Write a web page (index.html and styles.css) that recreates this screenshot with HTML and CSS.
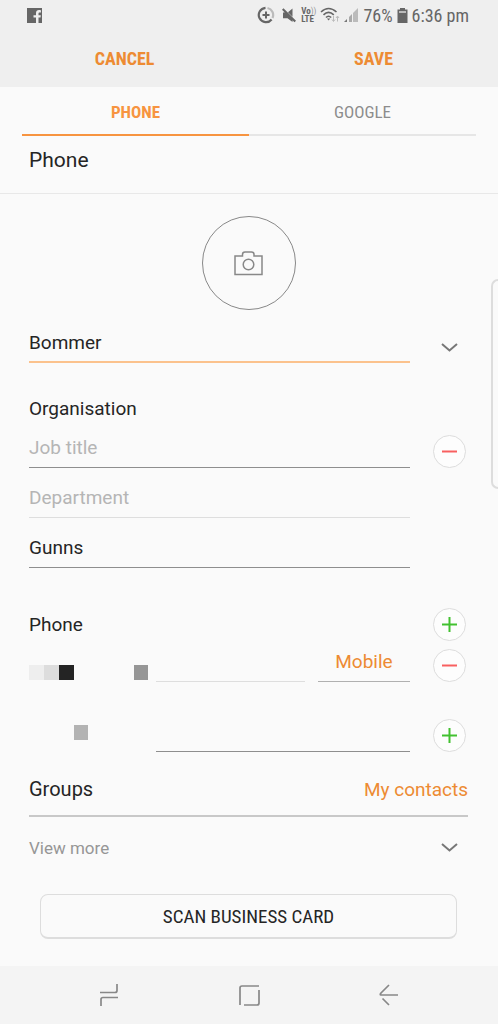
FILE: index.html
```
<!DOCTYPE html>
<html lang="en">
<head>
<meta charset="utf-8">
<meta name="viewport" content="width=device-width, initial-scale=1">
<title>Edit contact</title>
<link rel="stylesheet" href="styles.css">
</head>
<body>
<div class="screen">
  <div class="status">
    <svg class="fb" width="15" height="15" viewBox="0 0 15 15" aria-label="Facebook"><path fill="#666" d="M0 0h15v15h-3.500V9.500h2l.3-2.300h-2.300V5.600c0-.8.300-1.200 1.200-1.200h1.200V2.200C13.200 2.100 12.600 2 12 2 10.200 2 9 3.100 9 5.100v2.100H6.500v2.300H9V15H0z"/></svg>
    <div class="indicators">
      <svg class="saver" width="18" height="18" viewBox="0 0 18 18" fill="none"><path d="M8.500 1.800A7.200 7.200 0 1 0 14.600 13.500" stroke="#666" stroke-width="2.200"/><path d="M10.500 2A7.200 7.200 0 0 1 15.500 12" stroke="#bbb" stroke-width="2.200"/><path d="M9 5.500v7M5.500 9h7" stroke="#666" stroke-width="2"/></svg>
      <svg width="15" height="15" viewBox="0 0 15 15"><path fill="#666" d="M0 1.800L1.500.3 14 12.800l-1.500 1.500-2-2V14L5.500 10.300H1V4.500h1.700zM6 4.200L10.500.5v8.200z"/></svg>
      <span class="volte"><span>Vo<i>))</i></span><span>LTE</span></span>
      <svg width="20" height="16" viewBox="0 0 20 16" fill="none"><g stroke="#666" stroke-width="1.600"><path d="M1 5Q8.500-2 16.500 5"/><path d="M3.500 7.800Q8.500 3 13.800 7.800"/><path d="M6 10.500Q8.500 8 11.200 10.500"/></g><path fill="#666" d="M7 11.500h3.200l-1.600 2z"/><path stroke="#bbb" d="M13.500 9v5M12 12.500l1.500 2 1.500-2M17.500 14.500V9.500M16 11l1.500-2 1.500 2"/></svg>
      <svg width="15" height="14" viewBox="0 0 15 14"><path fill="#777" d="M0 14l3-3v3z"/><path fill="#aaa" d="M5 9l3-3v8H5z"/><path fill="#bbb" d="M9 5l5-5v14H9z"/></svg>
      <span>76%</span>
      <svg width="11" height="15" viewBox="0 0 11 15"><path fill="#bbb" d="M1 2h9v4H1z"/><path fill="#666" d="M3 0h5v1.500h2.500V15H.5V1.500H3zM2 3v2h7V3z"/></svg>
      <span>6:36 pm</span>
    </div>
  </div>
  <header class="actions">
    <button type="button">CANCEL</button>
    <button type="button">SAVE</button>
  </header>
  <nav class="tabs">
    <button type="button" class="active">PHONE</button>
    <button type="button">GOOGLE</button>
  </nav>
  <h1 class="account">Phone</h1>
  <form class="form">
    <button type="button" class="photo" aria-label="Add photo">
      <svg width="29" height="25" viewBox="0 0 29 25" fill="none" stroke="#888" stroke-width="1.500"><path d="M1 5h7.500V3.500Q8.500 1 11 1h6.500Q20 1 20 3.500V5h8v18.500H1z"/><circle cx="14.500" cy="13.500" r="5.300"/></svg>
    </button>

    <div class="row name-row">
      <input class="field focused" type="text" value="Bommer" aria-label="Name">
      <button type="button" class="expand" aria-label="More name fields"><svg width="17" height="10" viewBox="0 0 17 10"><path d="M1 1l7.500 6.500L16 1" fill="none" stroke="#777" stroke-width="2"/></svg></button>
    </div>

    <h2 class="label org-label">Organisation</h2>
    <div class="row">
      <input class="field" type="text" placeholder="Job title" aria-label="Job title">
      <button type="button" class="round remove" aria-label="Remove organisation"><svg width="15" height="15" viewBox="0 0 15 15"><path d="M0 7.500h15" stroke="currentColor" stroke-width="2"/></svg></button>
      <input class="field light" type="text" placeholder="Department" aria-label="Department">
      <input class="field company" type="text" value="Gunns" aria-label="Company">
    </div>

    <div class="row phone-head">
      <h2 class="label">Phone</h2>
      <button type="button" class="round add" aria-label="Add phone"><svg width="15" height="15" viewBox="0 0 15 15"><path d="M0 7.500h15M7.500 0v15" stroke="currentColor" stroke-width="2"/></svg></button>
    </div>
    <div class="row phone-row">
      <div class="number">
        <svg width="127" height="17" viewBox="0 0 127 17"><path fill="#eee" d="M0 0h15v15H0z"/><path fill="#ddd" d="M15 0h15v15H15z"/><path fill="#242424" d="M30 0h15v15H30z"/><path fill="#969696" d="M105 0h14v15h-14z"/></svg>
        <input class="field light" type="tel" aria-label="Phone number">
        <select class="field type" aria-label="Phone type"><option>Mobile</option></select>
      </div>
      <button type="button" class="round remove" aria-label="Remove phone"><svg width="15" height="15" viewBox="0 0 15 15"><path d="M0 7.500h15" stroke="currentColor" stroke-width="2"/></svg></button>
    </div>
    <div class="row detail-row">
      <div class="number">
        <svg width="127" height="15" viewBox="0 0 127 15"><path fill="#b3b3b3" d="M45 0h14v15H45z"/></svg>
        <input class="field" type="text" aria-label="Additional detail">
      </div>
      <button type="button" class="round add" aria-label="Add detail"><svg width="15" height="15" viewBox="0 0 15 15"><path d="M0 7.500h15M7.500 0v15" stroke="currentColor" stroke-width="2"/></svg></button>
    </div>

    <div class="groups">
      <h2>Groups</h2>
      <button type="button">My contacts</button>
    </div>
    <button type="button" class="more">View more <svg width="17" height="10" viewBox="0 0 17 10"><path d="M1 1l7.500 6.500L16 1" fill="none" stroke="#777" stroke-width="2"/></svg></button>
    <button type="button" class="scan">SCAN BUSINESS CARD</button>
  </form>
  <div class="edge"></div>
  <footer class="navbar">
    <button type="button" aria-label="Recents"><svg width="20" height="22" viewBox="0 0 20 22" fill="none" stroke="#888" stroke-width="1.700"><path d="M1 8.500h15q2 0 2-2V0M19 13.500H4q-2 0-2 2V22"/></svg></button>
    <button type="button" aria-label="Home"><svg width="21" height="21" viewBox="0 0 21 21" fill="none" stroke="#888" stroke-width="1.700"><path d="M1 20V3q0-2 2-2h17M5 20h13q2 0 2-2V5"/></svg></button>
    <button type="button" aria-label="Back"><svg width="20" height="22" viewBox="0 0 20 22" fill="none" stroke="#888" stroke-width="1.700"><path d="M10 1L2 9q-1.500 2 0 2h17M3.500 14.500L10 21"/></svg></button>
  </footer>
</div>
</body>
</html>
```
FILE: styles.css
```
* { box-sizing: border-box; }
body {
  margin: 0;
  background: #fafafa;
  color: #252525;
  font-family: Roboto, sans-serif;
  font-size: 19px;
}
button, input, select { font: inherit; color: inherit; border: 0; padding: 0; margin: 0; background: none; border-radius: 0; outline: 0; }
svg { display: block; flex: none; }
h1, h2 { margin: 0; font-size: 20px; font-weight: 400; line-height: 24px; }
.screen { position: relative; min-height: 100vh; display: flex; flex-direction: column; }

.status {
  display: flex; justify-content: space-between; align-items: center;
  height: 30px; padding: 0 29px 0 27px;
  background: #efefef; color: #666;
  font-family: "Roboto Condensed", Roboto, sans-serif; font-size: 18px;
}
.indicators { display: flex; align-items: center; gap: 4px; }
.saver { margin-right: 3px; }
.volte { display: flex; flex-direction: column; font-size: 9px; line-height: 8px; font-weight: 700; }
.volte i { font-style: normal; font-weight: 400; color: #999; }

.actions {
  display: grid; grid-template-columns: 1fr 1fr;
  height: 57px; background: #efefef;
  font-family: "Roboto Condensed", Roboto, sans-serif; font-size: 18px; font-weight: 700; color: #ed8b33;
}
.tabs {
  display: grid; grid-template-columns: 1fr 1fr;
  height: 49px; margin: 0 22px;
  font-family: "Roboto Condensed", Roboto, sans-serif; font-size: 17px; color: #8c8c8c;
}
.tabs button { padding-top: 2px; border-bottom: 2px solid #e6e6e6; }
.tabs .active { border-color: #f79440; color: #f79440; font-weight: 700; }
.account { padding: 12px 29px 21px; border-bottom: 1px solid #e8e8e8; font-size: 21px; }

.form { flex: 1; display: flex; flex-direction: column; padding: 22px 30px 27px 29px; }
.photo { align-self: center; display: grid; place-items: center; width: 94px; height: 94px; border: 1px solid #888; border-radius: 50%; }
.row { display: grid; grid-template-columns: minmax(0, 1fr) 35px; column-gap: 23px; align-items: end; }
.field { width: 100%; min-width: 0; height: 50px; padding-top: 10px; border-bottom: 1px solid #8e8e8e; }
.field::placeholder { color: #b5b5b5; opacity: 1; }
.row > .field { grid-column: 1; }
.light { border-color: #dedede; }
.focused { border-bottom: 2px solid #fbc28d; }
.name-row { padding-top: 3px; }
.expand { display: grid; place-items: center; width: 33px; height: 30px; }
.label { font-size: 19px; }
.org-label { padding-top: 37px; line-height: 18px; }
.round { display: grid; place-items: center; width: 33px; height: 33px; border: 1px solid #ddd; border-radius: 50%; background: #fdfdfd; }
.remove { color: #f86060; }
.add { color: #42c130; }

.phone-head { padding-top: 40px; align-items: center; }
.phone-row { padding-top: 1px; }
.number { display: flex; align-items: flex-end; }
.number .field { flex: 1; height: 40px; padding-top: 0; }
.number .type { flex: 0 0 92px; margin-left: 13px; appearance: none; text-align: center; text-align-last: center; color: #ed8b33; border-color: #b0b0b0; }
.detail-row { padding-top: 30px; }
.detail-row .number { align-items: center; }
.groups { display: flex; justify-content: space-between; height: 65px; padding-top: 11px; align-items: center; border-bottom: 2px solid #c8c8c8; }
.groups button { color: #ed8b33; }
.more { display: flex; justify-content: space-between; align-items: center; height: 61px; padding-right: 10px; font-size: 17px; color: #969696; }
.scan {
  height: 45px; margin: 16px 11px 0;
  border: 1px solid #ddd; border-bottom-width: 2px; border-radius: 8px;
  font-family: "Roboto Condensed", Roboto, sans-serif; font-size: 19px;
}
.edge { position: absolute; right: 0; top: 279px; width: 7px; height: 210px; border: 2px solid #ddd; border-right: 0; border-radius: 8px 0 0 8px; }
.navbar { display: grid; grid-template-columns: repeat(3, 1fr); width: 100%; height: 58px; padding: 0 39px; background: #f4f4f4; }
.navbar button { display: grid; place-items: center; }
```
